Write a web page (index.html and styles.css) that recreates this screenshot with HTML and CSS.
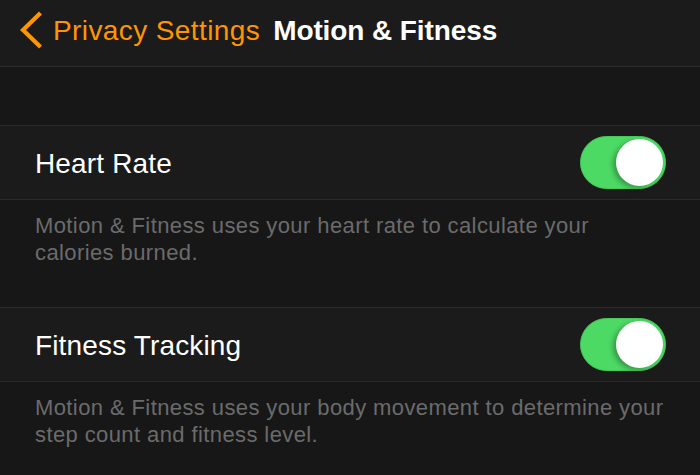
FILE: index.html
```html
<!DOCTYPE html>
<html lang="en">
<head>
<meta charset="utf-8">
<title>Motion &amp; Fitness</title>
<link rel="stylesheet" href="styles.css">
</head>
<body>
<div class="screen">
  <header class="nav">
    <a class="back" href="#">
      <svg class="chevron" width="24" height="38" viewBox="0 0 24 38" aria-hidden="true">
        <polyline points="21.5,2 4,19 21.5,36" fill="none" stroke="#ff9500" stroke-width="4.2"/>
      </svg>
      <span class="back-label">Privacy Settings</span>
    </a>
    <h1 class="title">Motion &amp; Fitness</h1>
  </header>

  <div class="spacer"></div>

  <section class="group">
    <div class="row">
      <span class="row-label">Heart Rate</span>
      <span class="toggle on"><span class="knob"></span></span>
    </div>
    <p class="footer">Motion &amp; Fitness uses your heart rate to calculate your calories burned.</p>
  </section>

  <section class="group">
    <div class="row">
      <span class="row-label">Fitness Tracking</span>
      <span class="toggle on"><span class="knob"></span></span>
    </div>
    <p class="footer">Motion &amp; Fitness uses your body movement to determine your step count and fitness level.</p>
  </section>
</div>
</body>
</html>
```
FILE: styles.css
```css
html, body {
  margin: 0;
  padding: 0;
  background: #171717;
}

.screen {
  width: 700px;
  height: 475px;
  overflow: hidden;
  background: #171717;
  font-family: "Liberation Sans", Arial, Helvetica, sans-serif;
  color: #ffffff;
}

.nav {
  height: 67px;
  box-sizing: border-box;
  display: flex;
  align-items: center;
  padding: 0 0 5px 19px;
  background: #1b1b1b;
  border-bottom: 1px solid #2d2d2d;
}

.back {
  display: flex;
  align-items: center;
  gap: 10px;
  text-decoration: none;
  color: #ff9500;
}

.chevron {
  display: block;
  margin-top: -1px;
}

.back-label {
  font-size: 28px;
  letter-spacing: 0.4px;
}

.title {
  margin: 0 0 0 13px;
  font-size: 28px;
  font-weight: bold;
  letter-spacing: -0.1px;
  color: #ffffff;
}

.spacer {
  height: 58px;
}

.row {
  height: 73px;
  display: flex;
  align-items: center;
  justify-content: space-between;
  padding: 0 34px 0 35px;
  background: #1b1b1b;
  border-top: 1px solid #2a2a2a;
  border-bottom: 1px solid #2a2a2a;
}

.row-label {
  font-size: 28px;
  letter-spacing: 0.15px;
  padding-top: 2px;
}

.toggle {
  position: relative;
  width: 86px;
  height: 53px;
  border-radius: 27px;
  background: #4cd964;
  box-sizing: border-box;
  border: 1px solid #44c95a;
}

.knob {
  position: absolute;
  right: 2px;
  top: 2px;
  width: 47px;
  height: 47px;
  border-radius: 50%;
  background: #ffffff;
  box-shadow: -3px 2px 5px rgba(0, 0, 0, 0.3);
}

.footer {
  margin: 0;
  padding: 12px 32px 41px 35px;
  font-size: 22px;
  line-height: 27px;
  letter-spacing: 0.4px;
  color: #6b6b6b;
}
```
